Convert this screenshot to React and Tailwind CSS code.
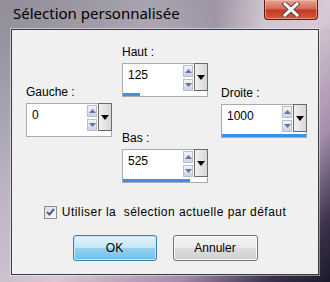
import React from 'react';

const Spin = () => (
    <div className="flex flex-col gap-[2px] pt-[1px] w-[10px]">
        <div className="h-[12px] border border-[#b9bdd0] bg-[linear-gradient(#f4f5fa,#cfd3e4)] flex items-center justify-center">
            <svg width="7" height="4"><path d="M0 4 L3.5 0 L7 4Z" fill="#6a739e" /></svg>
        </div>
        <div className="h-[12px] border border-[#b9bdd0] bg-[linear-gradient(#f4f5fa,#cfd3e4)] flex items-center justify-center">
            <svg width="7" height="4"><path d="M0 0 L3.5 4 L7 0Z" fill="#6a739e" /></svg>
        </div>
    </div>
);

const Field = ({ value, pct }) => (
    <div className="w-[86px] h-[34px] bg-white border border-[#a9abb4] flex flex-col">
        <div className="flex h-[28px]">
            <div className="flex-1 pl-[5px] pt-[2px] text-[12px] text-black">{value}</div>
            <Spin />
            <div className="w-[14px] h-[28px] -mt-px -mr-px ml-px border border-[#6b6b6b] bg-[linear-gradient(90deg,#f2f2f2,#d6d6d6)] flex items-center justify-center">
                <svg width="8" height="5"><path d="M0 0 L8 0 L4 5Z" fill="#000" /></svg>
            </div>
        </div>
        <div className="flex-1 pt-[1px]">
            <div className="h-full bg-[#3f8fe4]" style={{ width: `${pct}%` }}></div>
        </div>
    </div>
);

const Label = ({ children }) => (
    <div className="h-[14px] leading-[14px] text-[12px] text-black mb-[4px]">{children}</div>
);

export default function App() {
    return (
        <div className="w-[330px] h-[282px] overflow-hidden flex flex-col bg-[linear-gradient(135deg,#8a8a96_0%,#c0b8c6_35%,#d6c8d4_55%,#a48eaa_75%,#3a3248_90%,#1c1a2a_100%)] font-['Liberation_Sans',Arial,sans-serif]">
            {/* title bar */}
            <div className="h-[29px] flex items-start pl-[13px] pr-[12px] bg-[linear-gradient(90deg,rgba(150,146,156,0.6)_0%,rgba(150,146,156,0.3)_45%,rgba(90,80,100,0.35)_65%,rgba(220,210,220,0.2)_80%)]">
                <div className="flex-1 pt-[3px] text-[15px] leading-[20px] text-black font-['Noto_Sans',sans-serif]">Sélection personnalisée</div>
                <div className="w-[54px] h-[20px] rounded-b-[4px] border border-t-0 border-[#5e1a14] bg-[linear-gradient(#e8a696_0%,#d66a56_45%,#c23a24_55%,#d85a3e_100%)] flex items-center justify-center shadow-[inset_0_0_0_1px_rgba(255,200,190,0.5)]">
                    <svg width="18" height="15" viewBox="0 0 18 15">
                        <path d="M3 2 L15 13 M15 2 L3 13" stroke="#5a4a4a" strokeWidth="5" strokeLinecap="square" />
                        <path d="M3 2 L15 13 M15 2 L3 13" stroke="#fff" strokeWidth="3" strokeLinecap="square" />
                    </svg>
                </div>
            </div>
            {/* client */}
            <div className="mx-[11px] h-[246px] border border-[#3a3a48] shadow-[0_0_0_1px_rgba(255,255,255,0.45)] bg-[#f0f0f0] flex flex-col">
                <div className="flex pl-[14px]">
                    <div className="w-[96px] pt-[55px]">
                        <Label>Gauche :</Label>
                        <Field value="0" pct={0} />
                    </div>
                    <div className="w-[99px] pt-[15px]">
                        <Label>Haut :</Label>
                        <Field value="125" pct={20} />
                        <div className="h-[34px]"></div>
                        <Label>Bas :</Label>
                        <Field value="525" pct={80} />
                    </div>
                    <div className="pt-[56px]">
                        <Label>Droite :</Label>
                        <Field value="1000" pct={100} />
                    </div>
                </div>
                <div className="mt-[20px] flex items-center justify-center gap-[5px] text-[12px] text-black">
                    <div className="w-[13px] h-[13px] border border-[#8e8f8f] bg-[linear-gradient(135deg,#dcdcdc,#fbfbfb)] flex items-center justify-center">
                        <svg width="9" height="8" viewBox="0 0 9 8">
                            <path d="M1 4 L3.5 6.5 L8 1" stroke="#4a5f97" strokeWidth="2" fill="none" />
                        </svg>
                    </div>
                    <span className="whitespace-pre tracking-[0.45px]">Utiliser la  sélection actuelle par défaut</span>
                </div>
                <div className="mt-[14px] flex justify-center gap-[16px] text-[12px] text-black">
                    <div className="w-[84px] h-[26px] rounded-[3px] border border-[#3c7fb1] bg-[linear-gradient(#e5f4fc_0%,#c4e5f6_50%,#98d1ef_51%,#6cc0e8_100%)] shadow-[inset_0_0_0_1px_#bfe9ff] flex items-center justify-center">OK</div>
                    <div className="w-[85px] h-[26px] rounded-[3px] border border-[#707070] bg-[linear-gradient(#f2f2f2_0%,#ebebeb_50%,#dddddd_51%,#cfcfcf_100%)] shadow-[inset_0_0_0_1px_#fcfcfc] flex items-center justify-center">Annuler</div>
                </div>
            </div>
        </div>
    );
}
